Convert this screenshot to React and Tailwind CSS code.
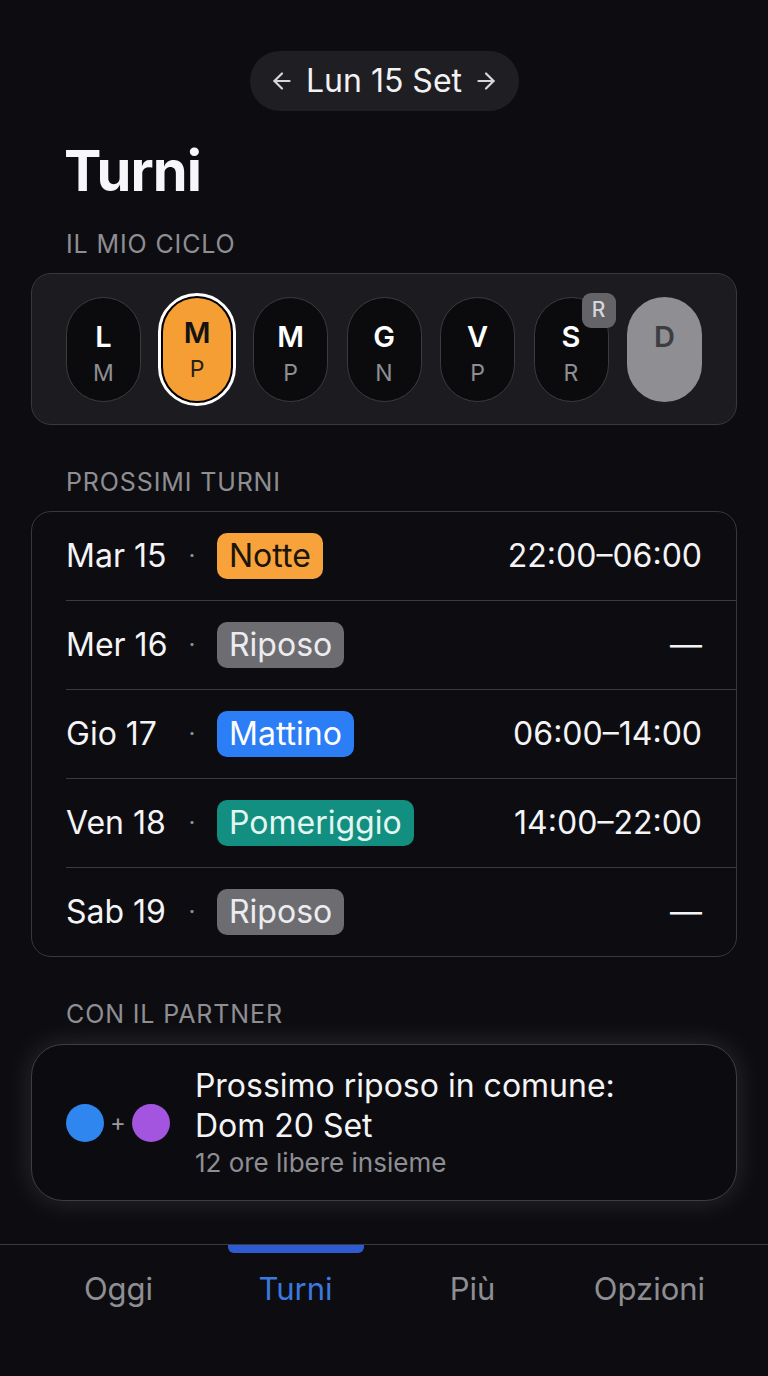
import { ArrowLeft, ArrowRight } from 'lucide-react'

const cycle = [
  { day: 'L', shift: 'M' },
  { day: 'M', shift: 'P', selected: true },
  { day: 'M', shift: 'P' },
  { day: 'G', shift: 'N' },
  { day: 'V', shift: 'P' },
  { day: 'S', shift: 'R', badge: 'R' },
  { day: 'D', off: true },
]

const shifts = [
  { date: 'Mar 15', label: 'Notte', badge: 'bg-[#f7a23b] text-[#1b1408]', time: '22:00–06:00' },
  { date: 'Mer 16', label: 'Riposo', badge: 'bg-[#6c6c71] text-[#ececf0]', time: '—' },
  { date: 'Gio 17', label: 'Mattino', badge: 'bg-[#2b7ef5] text-white', time: '06:00–14:00' },
  { date: 'Ven 18', label: 'Pomeriggio', badge: 'bg-[#128f80] text-[#e3f6f2]', time: '14:00–22:00' },
  { date: 'Sab 19', label: 'Riposo', badge: 'bg-[#6c6c71] text-[#ececf0]', time: '—' },
]

const tabs = ['Oggi', 'Turni', 'Più', 'Opzioni']

function CyclePill({ item }) {
  if (item.selected) {
    return (
      <div className="w-[75px] flex justify-center">
        <div className="w-[78px] h-[113px] shrink-0 rounded-full border-[3px] border-white bg-black p-[2px]">
          <div className="w-full h-full rounded-full bg-[#f59e33] flex flex-col items-center pt-[20px]">
            <span className="text-[29px] leading-[30px] font-semibold text-[#141414]">{item.day}</span>
            <span className="mt-[8px] text-[23px] leading-[26px] text-[#2a2015]">{item.shift}</span>
          </div>
        </div>
      </div>
    )
  }
  if (item.off) {
    return (
      <div className="w-[75px] h-[105px] rounded-full bg-[#8e8e93] flex flex-col items-center pt-[25px]">
        <span className="text-[29px] leading-[30px] font-semibold text-[#3d3d40]">{item.day}</span>
      </div>
    )
  }
  return (
    <div className="relative w-[75px] h-[105px] rounded-full bg-[#0b0b0e] border-[1.5px] border-[#3b3b40] flex flex-col items-center pt-[24px]">
      <span className="text-[29px] leading-[30px] font-semibold text-white">{item.day}</span>
      <span className="mt-[8px] text-[23px] leading-[26px] text-[#8e8e93]">{item.shift}</span>
      {item.badge && (
        <span className="absolute -top-[5px] -right-[8px] w-[34px] h-[35px] rounded-[9px] bg-[#636368] flex items-center justify-center text-[21px] font-medium text-[#d6d6da]">
          {item.badge}
        </span>
      )}
    </div>
  )
}

function SectionLabel({ children, className }) {
  return (
    <p className={`px-[66px] text-[25px] leading-[24px] tracking-[0.035em] text-[#8e8e93] ${className}`}>
      {children}
    </p>
  )
}

export default function App() {
  return (
    <div
      className="w-[768px] min-h-[1376px] bg-[#0d0d11] text-white flex flex-col"
      style={{ fontFamily: 'Inter, "Noto Sans", sans-serif' }}
    >
      {/* date switcher */}
      <div className="flex justify-center pt-[51px]">
        <div className="h-[60px] w-[269px] rounded-full bg-[#1f1f23] flex items-center justify-center gap-[11px]">
          <ArrowLeft size={26} strokeWidth={2} className="text-[#d8d8dc]" />
          <span className="text-[32px] leading-none text-[#f2f2f4]">Lun 15 Set</span>
          <ArrowRight size={26} strokeWidth={2} className="text-[#d8d8dc]" />
        </div>
      </div>

      <h1 className="mt-[32px] px-[64px] text-[56px] leading-[56px] font-bold tracking-[-0.015em] text-[#f7f7f9]">Turni</h1>

      <SectionLabel className="mt-[33px]">IL MIO CICLO</SectionLabel>

      {/* weekly cycle */}
      <div className="mt-[17px] mx-[31px] h-[152px] rounded-[20px] bg-[#1c1c20] border-[1.5px] border-[#38383d] flex items-center justify-between px-[34px]">
        {cycle.map((item, i) => (
          <CyclePill key={i} item={item} />
        ))}
      </div>

      <SectionLabel className="mt-[45px]">PROSSIMI TURNI</SectionLabel>

      {/* upcoming shifts */}
      <div className="mt-[17px] mx-[31px] rounded-[20px] border-[1.5px] border-[#38383d] bg-[#0d0d11] overflow-hidden">
        {shifts.map((s, i) => (
          <div key={i}>
            {i > 0 && <div className="ml-[34px] border-t border-[#3a3a3f]" />}
            <div className="h-[88px] flex items-center pl-[34px] pr-[34px]">
              <span className="w-[120px] text-[32px] text-[#f4f4f6]">{s.date}</span>
              <span className="w-[12px] text-center text-[24px] text-[#8e8e93]">·</span>
              <span className={`ml-[19px] h-[46px] px-[12px] rounded-[10px] flex items-center text-[32px] ${s.badge}`}>
                {s.label}
              </span>
              <span className="ml-auto text-[32px] text-[#f4f4f6]">{s.time}</span>
            </div>
          </div>
        ))}
      </div>

      <SectionLabel className="mt-[45px]">CON IL PARTNER</SectionLabel>

      {/* partner */}
      <div className="mt-[18px] mx-[31px] h-[157px] rounded-[32px] border-[1.5px] border-[#3d3d43] bg-[#0c0c10] shadow-[0_0_28px_rgba(190,190,210,0.16)] flex items-center pl-[34px]">
        <div className="flex items-center">
          <span className="w-[38px] h-[38px] rounded-full bg-[#2f86ef]" />
          <span className="mx-[6px] text-[24px] text-[#9a9aa0]">+</span>
          <span className="w-[38px] h-[38px] rounded-full bg-[#a455e0]" />
        </div>
        <div className="ml-[25px] flex flex-col">
          <span className="text-[32px] leading-[40px] text-[#f4f4f6]">Prossimo riposo in comune:</span>
          <span className="text-[32px] leading-[40px] text-[#f4f4f6]">Dom 20 Set</span>
          <span className="text-[26px] leading-[34px] text-[#8e8e93]">12 ore libere insieme</span>
        </div>
      </div>

      {/* tab bar */}
      <nav className="mt-[43px] border-t border-[#3a3a3f] grid grid-cols-4 px-[30px]">
        {tabs.map((t) => {
          const active = t === 'Turni'
          return (
            <div key={t} className="relative flex justify-center pt-[26px] pb-[40px]">
              {active && (
                <span className="absolute top-0 left-1/2 -translate-x-1/2 w-[136px] h-[8px] rounded-b-[6px] bg-[#2f5bd2]" />
              )}
              <span className={`text-[31px] leading-[36px] ${active ? 'text-[#3b78df]' : 'text-[#8e8e93]'}`}>{t}</span>
            </div>
          )
        })}
      </nav>
    </div>
  )
}
